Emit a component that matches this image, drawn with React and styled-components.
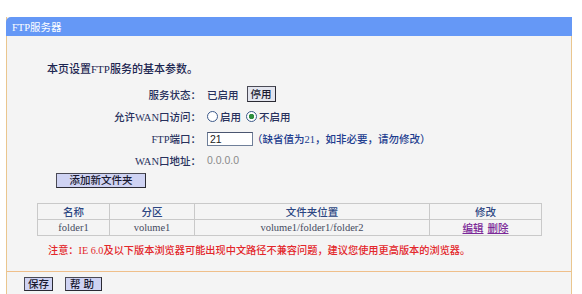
import React from 'react';
import styled, { createGlobalStyle } from 'styled-components';

const Global = createGlobalStyle`
  html, body { margin: 0; padding: 0; background: #ffffff; overflow: hidden; }
  body {
    font-family: "Liberation Serif", "Noto Sans CJK SC", serif;
    font-size: 10.5px;
    font-weight: 500;
    color: #1f2b52;
  }
`;

const Page = styled.div`
  padding: 17px 10px 0 6px;
`;

const Panel = styled.div`
  border-left: 1px solid #eac68e;
  border-right: 1px solid #eac68e;
  background: #f4f4f4;
`;

const Header = styled.div`
  height: 19px;
  margin: 0 -1px;
  padding-left: 6px;
  display: flex;
  align-items: center;
  background: #6598f6;
  color: #ffffff;
  border-top-left-radius: 5px;
  font-size: 10.5px;
  font-weight: 400;
`;

const Body = styled.div`
  padding-top: 26px;
`;

const Intro = styled.div`
  padding-left: 40px;
  line-height: 14px;
  font-size: 11px;
  color: #1c2550;
`;

const Form = styled.div`
  display: grid;
  grid-template-columns: 194px 1fr;
  grid-auto-rows: 22px;
  column-gap: 6px;
  margin-top: 7px;
`;

const Label = styled.div`
  display: flex;
  align-items: center;
  justify-content: flex-end;
  color: #27305c;
`;

const Value = styled.div`
  display: flex;
  align-items: center;
  gap: ${(p) => p.$gap || 6}px;
  color: ${(p) => p.$muted ? '#8a8a8a' : '#27305c'};
  font-family: ${(p) => p.$muted ? '"Liberation Sans", sans-serif' : 'inherit'};
  font-weight: ${(p) => p.$muted ? 400 : 500};
`;

const Btn = styled.button`
  font-family: "Noto Sans CJK SC", sans-serif;
  font-size: 10.5px;
  font-weight: 500;
  line-height: 1;
  height: ${(p) => p.$h || 14}px;
  padding: 0 ${(p) => p.$px || 4}px;
  background: ${(p) => p.$bg || '#cfd3f3'};
  border: 1px solid #4a4a55;
  border-right-color: #2a2a33;
  border-bottom-color: #2a2a33;
  color: #1a1a30;
  letter-spacing: ${(p) => p.$ls || 0}px;
  cursor: pointer;
`;

const Radio = styled.span`
  display: inline-flex;
  align-items: center;
  gap: 2px;
  &::before {
    content: '';
    width: 9px;
    height: 9px;
    border-radius: 50%;
    border: 1px solid #3d5a8a;
    background: ${(p) => p.$on ? 'radial-gradient(circle, #2f8f3f 0 2.5px, #ffffff 3px)' : '#ffffff'};
  }
`;

const Input = styled.div`
  width: 40px;
  height: 12px;
  border: 1px solid #6f7f99;
  border-top-color: #4b5670;
  background: #ffffff;
  padding: 0 2px;
  font-family: "Liberation Sans", sans-serif;
  font-size: 10.5px;
  font-weight: 400;
  line-height: 12px;
  color: #222;
  margin-top: 2px;
`;

const Hint = styled.span`
  color: #1d3d8f;
  margin-left: -6px;
`;

const AddRow = styled.div`
  margin-top: 2px;
  padding-left: 49px;
  display: flex;
`;

const Table = styled.table`
  margin: 15px 0 0 30px;
  width: 504px;
  border-collapse: collapse;
  table-layout: fixed;
`;

const Th = styled.th`
  height: 15px;
  padding: 0;
  border: 1px solid #c9c9c9;
  font-weight: 500;
  color: #2c4682;
  font-size: 10.5px;
  text-align: center;
`;

const Td = styled.td`
  height: 15px;
  padding: 0;
  border: 1px solid #c9c9c9;
  color: #444a5e;
  font-size: 10.5px;
  font-weight: 400;
  text-align: center;
`;

const Link = styled.a`
  color: #7b2898;
  font-weight: 500;
  text-decoration: underline;
  margin: 0 2px;
  cursor: pointer;
`;

const Note = styled.div`
  margin-top: 8px;
  padding-left: 41px;
  line-height: 14px;
  font-size: 10.2px;
  color: #e3262a;
`;

const Footer = styled.div`
  margin-top: 13px;
  border-top: 1px solid #efbf8a;
  padding: 5px 0 10px 17px;
  display: flex;
  gap: 12px;
`;

export default function App() {
  return (
    <>
      <Global />
      <Page>
        <Panel>
          <Header>FTP服务器</Header>
          <Body>
            <Intro>本页设置FTP服务的基本参数。</Intro>
            <Form>
              <Label>服务状态：</Label>
              <Value $gap={8}>
                <span>已启用</span>
                <Btn $h={16} $px={3} $bg="#e3e5ee">停用</Btn>
              </Value>
              <Label>允许WAN口访问：</Label>
              <Value $gap={5}>
                <Radio>启用</Radio>
                <Radio $on>不启用</Radio>
              </Value>
              <Label>FTP端口：</Label>
              <Value $gap={5}>
                <Input>21</Input>
                <Hint>（缺省值为21，如非必要，请勿修改）</Hint>
              </Value>
              <Label>WAN口地址：</Label>
              <Value $muted>0.0.0.0</Value>
            </Form>
            <AddRow>
              <Btn $h={15} style={{ width: 90 }}>添加新文件夹</Btn>
            </AddRow>
            <Table>
              <colgroup>
                <col style={{ width: 72 }} />
                <col style={{ width: 85 }} />
                <col style={{ width: 235 }} />
                <col style={{ width: 112 }} />
              </colgroup>
              <thead>
                <tr>
                  <Th>名称</Th>
                  <Th>分区</Th>
                  <Th>文件夹位置</Th>
                  <Th>修改</Th>
                </tr>
              </thead>
              <tbody>
                <tr>
                  <Td>folder1</Td>
                  <Td>volume1</Td>
                  <Td>volume1/folder1/folder2</Td>
                  <Td>
                    <Link>编辑</Link>
                    <Link>删除</Link>
                  </Td>
                </tr>
              </tbody>
            </Table>
            <Note>注意：IE 6.0及以下版本浏览器可能出现中文路径不兼容问题，建议您使用更高版本的浏览器。</Note>
            <Footer>
              <Btn $px={3}>保存</Btn>
              <Btn $px={4} $ls={3}>帮助</Btn>
            </Footer>
          </Body>
        </Panel>
      </Page>
    </>
  );
}
